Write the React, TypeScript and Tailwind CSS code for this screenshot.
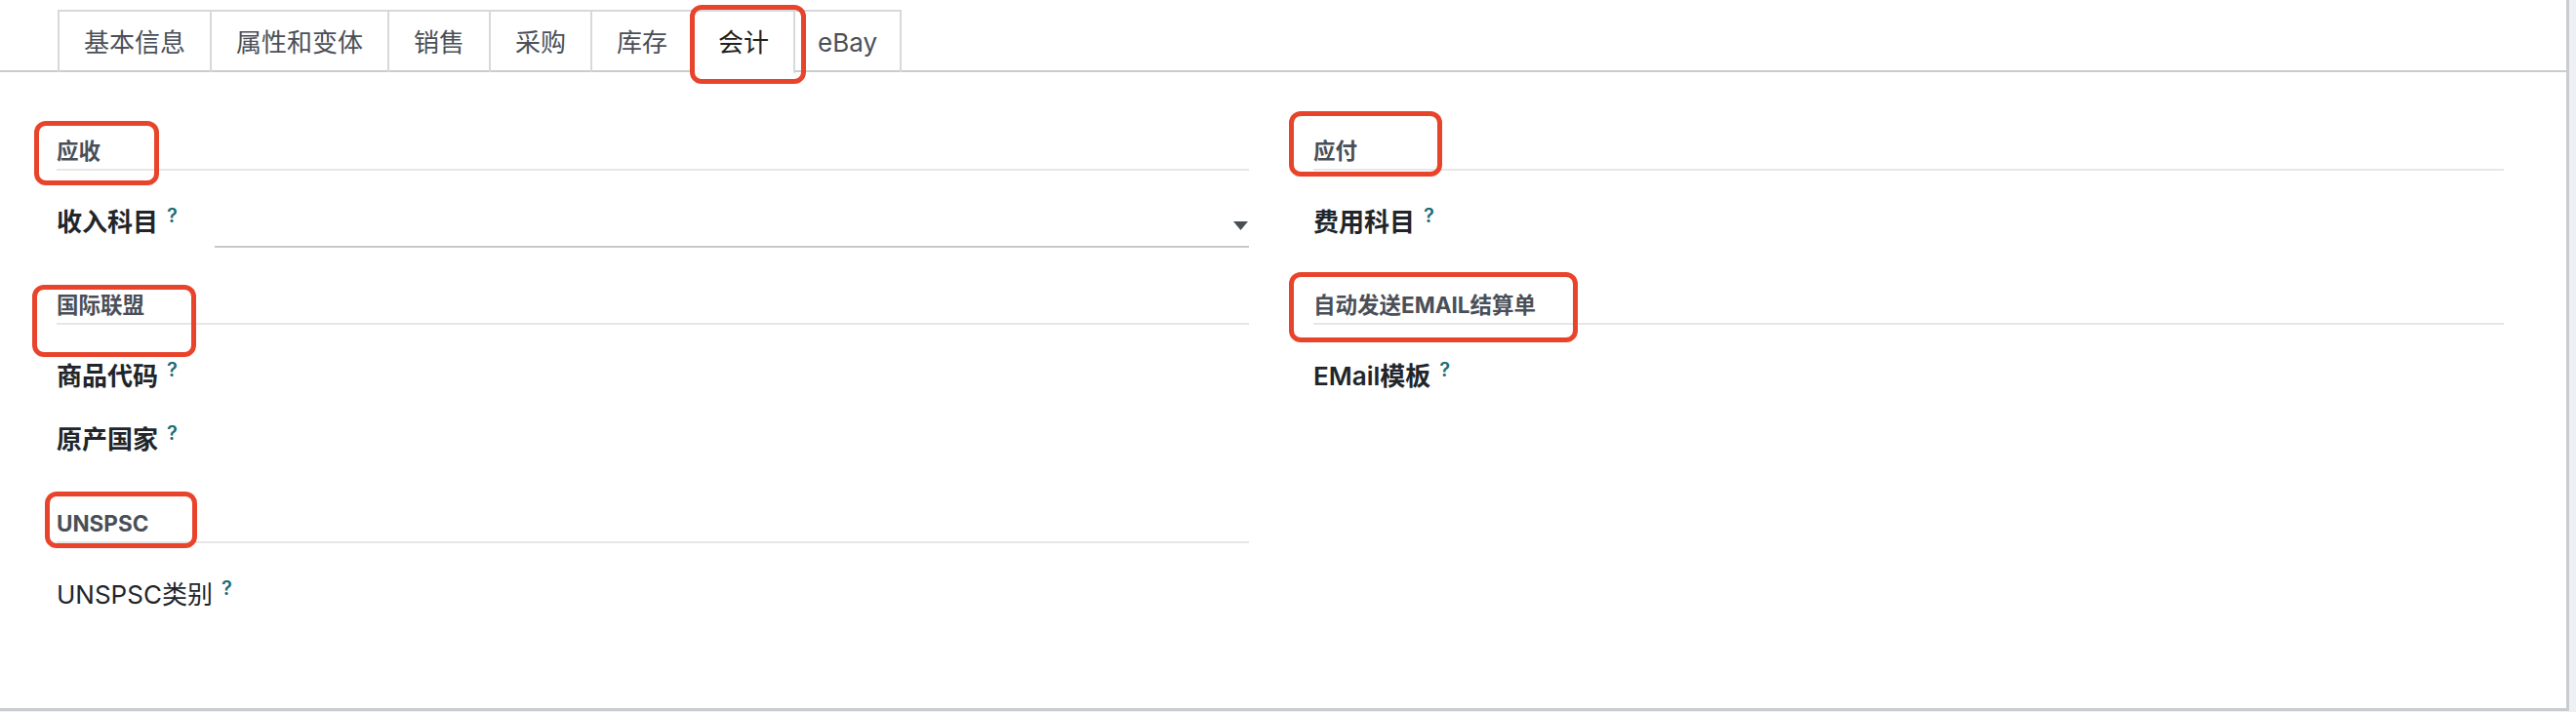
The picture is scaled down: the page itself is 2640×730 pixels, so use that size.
import React from "react";

const tabs = ["基本信息", "属性和变体", "销售", "采购", "库存", "会计", "eBay"];
const activeTab = "会计";

function Help() {
  return <sup className="ml-[9px] text-[20px] font-semibold text-[#1c6e78] relative top-[-9px]">?</sup>;
}

function SectionHeader({ title }: { title: string }) {
  return (
    <div className="h-[36px] flex items-end border-b-2 border-[#e6e6e6] text-[22.5px] leading-[32px] font-bold text-[#4a4f57] pb-[2px]">
      {title}
    </div>
  );
}

function FieldRow({ label, select, bold = true, className = "" }: { label: string; select?: boolean; bold?: boolean; className?: string }) {
  return (
    <div className={`h-[52px] flex items-center ${className}`}>
      <div className={`w-[162px] shrink-0 text-[26px] leading-[32px] text-[#212529] whitespace-nowrap ${bold ? "font-semibold" : "font-normal"}`}>
        {label}
        <Help />
      </div>
      {select && (
        <div className="flex-1 self-stretch flex items-center justify-end border-b-2 border-[#c8c8c8] pr-[1px]">
          <svg width="15" height="9" viewBox="0 0 15 9" className="mt-[8px]">
            <path d="M0 0 L15 0 L7.5 9 Z" fill="#4a4f55" />
          </svg>
        </div>
      )}
    </div>
  );
}

// red annotation boxes drawn over the screenshot
const marks = [
  "left-[707px] top-[5px] w-[119px] h-[81px]",
  "left-[35px] top-[124px] w-[128px] h-[66px]",
  "left-[33px] top-[292px] w-[168px] h-[74px]",
  "left-[46px] top-[504px] w-[156px] h-[58px]",
  "left-[1321px] top-[114px] w-[157px] h-[67px]",
  "left-[1321px] top-[279px] w-[296px] h-[72px]",
];

export default function App() {
  return (
    <div className="w-[2640px] h-[730px] bg-[#eff0f3] flex" style={{ fontFamily: '"Inter", "Noto Sans CJK SC", sans-serif' }}>
      <div className="relative w-[2633px] h-[729px] bg-white border-r-[3px] border-b-[3px] border-[#c9ccd0] flex flex-col">
        {/* Tabs */}
        <div className="flex pl-[59px] pt-[10px] border-b-2 border-[#c9ccd0] h-[74px]">
          {tabs.map((t) => {
            const active = t === activeTab;
            return (
              <div
                key={t}
                className={`h-[64px] ${t === "eBay" ? "px-[23px]" : "px-[25px]"} flex items-center text-[26px] border-2 border-l-0 first:border-l-2 border-[#d6d9dc] ${
                  active ? "bg-white text-[#222] border-b-white -mb-[2px] h-[66px]" : "border-b-0 text-[#4b5057]"
                }`}
              >
                {t}
              </div>
            );
          })}
        </div>

        {/* Body */}
        <div className="flex pl-[58px] gap-x-[66px]">
          <div className="w-[1222px] flex flex-col">
            <div className="mt-[65px]"><SectionHeader title="应收" /></div>
            <FieldRow label="收入科目" select className="mt-[27px]" />
            <div className="mt-[43px]"><SectionHeader title="国际联盟" /></div>
            <FieldRow label="商品代码" className="mt-[27px]" />
            <FieldRow label="原产国家" className="mt-[13px]" />
            <div className="mt-[44px]"><SectionHeader title="UNSPSC" /></div>
            <FieldRow label="UNSPSC类别" bold={false} className="mt-[27px]" />
          </div>
          <div className="w-[1220px] flex flex-col">
            <div className="mt-[65px]"><SectionHeader title="应付" /></div>
            <FieldRow label="费用科目" className="mt-[27px]" />
            <div className="mt-[43px]"><SectionHeader title="自动发送EMAIL结算单" /></div>
            <FieldRow label="EMail模板" className="mt-[27px]" />
          </div>
        </div>

        {marks.map((m) => (
          <div key={m} className={`absolute ${m} border-[5px] border-[#e8442c] rounded-[12px]`} />
        ))}
      </div>
    </div>
  );
}
